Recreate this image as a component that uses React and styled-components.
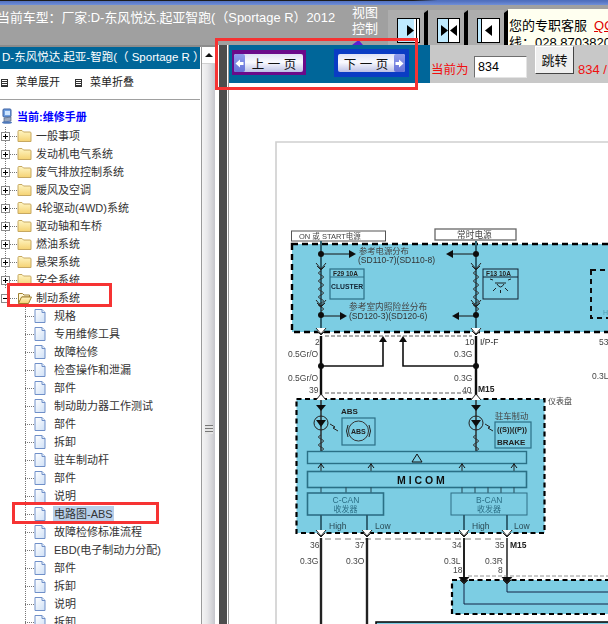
import React from "react";
import styled, { createGlobalStyle } from "styled-components";

const Global = createGlobalStyle`
  html, body { margin: 0; padding: 0; background: #fff; }
  body { font-family: "Liberation Sans", "Noto Sans CJK SC", sans-serif; text-spacing-trim: space-all; }
  * { box-sizing: border-box; }
`;

const CJK = `"Liberation Sans", "Noto Sans CJK SC", sans-serif`;

const Page = styled.div`
  position: relative;
  width: 608px;
  height: 624px;
  overflow: hidden;
  display: flex;
  flex-direction: column;
  font-family: ${CJK};
`;

const TitleStrip = styled.div`
  height: 5px;
  flex: none;
  background:
    linear-gradient(90deg, #1c1c1c 0 68%, #4f6fbe 72%) top / 100% 1px no-repeat,
    linear-gradient(#4a68b8, #6f8fd8);
`;

const Header = styled.header`
  height: 40px;
  flex: none;
  background: #a0a0a0;
  display: flex;
  align-items: stretch;
  color: #fff;
`;

const CarModel = styled.div`
  width: 355px;
  flex: none;
  font-size: 12.9px;
  line-height: 16px;
  padding-top: 5px;
  white-space: nowrap;
  overflow: hidden;
  margin-left: -3px;
`;

const ViewLabel = styled.div`
  position: relative;
  width: 36px;
  flex: none;
  font-size: 13px;
  line-height: 16px;
  padding-top: 0;
`;

const ViewMark = styled.span`
  position: absolute;
  left: 0;
  top: 35px;
  width: 11px;
  height: 5px;
  background: #5c1fd0;
  clip-path: polygon(0 100%, 60% 0, 100% 100%);
`;

const ViewButtons = styled.div`
  display: flex;
  gap: 4px;
  padding-top: 5px;
  width: 120px;
  flex: none;
  align-items: flex-start;
`;

const ViewButton = styled.div`
  position: relative;
  width: 36px;
  height: 35px;
  background: #adadad;
  padding: 8px 0 0 9px;
  &::after {
    content: "";
    position: absolute;
    right: -4px;
    top: 0;
    width: 4px;
    height: 35px;
    background: #000;
    clip-path: polygon(100% 0, 100% 100%, 0 100%, 0 3px);
  }
`;

const ServicePanel = styled.div`
  flex: 1;
  margin-top: 4px;
  background: #fffff0;
  color: #000;
  font-size: 13px;
  line-height: 17px;
  padding: 8px 0 0 1px;
  white-space: nowrap;
  overflow: hidden;
`;

const Qq = styled.span`
  color: #e00000;
  text-decoration: underline;
  margin-left: 7px;
`;

const Body = styled.div`
  flex: 1;
  min-height: 0;
  display: flex;
`;

const Sidebar = styled.aside`
  width: 201px;
  flex: none;
  border-top: 2px solid #8c8c8c;
  background: #fff;
  overflow: hidden;
  display: flex;
  flex-direction: column;
`;

const SideTitle = styled.div`
  height: 22px;
  margin-right: 1px;
  background: #006699;
  color: #fff;
  font-size: 11.5px;
  line-height: 21px;
  padding-left: 2px;
  white-space: nowrap;
  overflow: hidden;
  flex: none;
`;

const MenuRow = styled.div`
  height: 31px;
  flex: none;
  margin-right: 1px;
  display: flex;
  align-items: flex-start;
  padding: 6px 0 0 1px;
  border-bottom: 1px solid #a0a0a0;
  font-size: 11px;
  line-height: 14px;
  color: #222;
`;

const MenuItem = styled.span`
  display: flex;
  align-items: center;
  gap: 8px;
  width: 74px;
`;

const MenuGlyph = styled.span`
  width: 7px;
  height: 8px;
  border: 1px solid #333;
  background: repeating-linear-gradient(#fff 0 1px, #333 1px 2px);
  margin-top: 2px;
`;

const Current = styled.div`
  height: 27px;
  flex: none;
  display: flex;
  align-items: center;
  gap: 4px;
  padding: 4px 0 0 2px;
  color: #0000ff;
  font-size: 11px;
  font-weight: 700;
`;

const Tree = styled.ul`
  list-style: none;
  margin: 0;
  padding: 0;
  font-size: 11px;
  color: #333;
`;

const dottedAt = (x) => `
  background-image: linear-gradient(#777 50%, transparent 50%);
  background-size: 1px 2px;
  background-repeat: repeat-y;
  background-position: ${x}px 0;
`;

const FolderRow = styled.li`
  height: 18px;
  display: flex;
  align-items: center;
  padding-left: 1px;
  ${(p) => (p.$last ? "" : dottedAt(5))}
`;

const LeafRow = styled.li`
  height: 18px;
  display: flex;
  align-items: center;
  padding-left: 25px;
  ${dottedAt(25)}
`;

const Expander = styled.span`
  width: 9px;
  height: 9px;
  flex: none;
  border: 1px solid #8a8a8a;
  background:
    ${(p) => (p.$open ? "" : "linear-gradient(#000, #000) center / 1px 5px no-repeat,")}
    linear-gradient(#000, #000) center / 5px 1px no-repeat,
    #fff;
`;

const Dots = styled.span`
  width: ${(p) => p.$w}px;
  flex: none;
  height: 1px;
  background-image: linear-gradient(90deg, #777 50%, transparent 50%);
  background-size: 2px 1px;
`;

const Label = styled.span`
  margin-left: ${(p) => p.$gap}px;
  white-space: nowrap;
  line-height: 16px;
  padding: 0 1px;
  background: ${(p) => (p.$selected ? "#b8cfe9" : "transparent")};
`;

const Splitter = styled.div`
  width: 14px;
  flex: none;
  display: flex;
  flex-direction: column;
  align-items: center;
  border-left: 1px solid #9a9a9a;
  border-top: 2px solid #8c8c8c;
  background: linear-gradient(90deg, #f4f4f4, #e8e8ea 40%, #c6c6cc);
`;

const ScrollUp = styled.div`
  width: 100%;
  height: 17px;
  flex: none;
  background: #fff;
  display: flex;
  justify-content: center;
  padding-top: 6px;
  border-bottom: 1px solid #d0d0d0;
  &::before {
    content: "";
    width: 0;
    height: 0;
    border-left: 4px solid transparent;
    border-right: 4px solid transparent;
    border-bottom: 4px solid #111;
  }
`;

const Grip = styled.div`
  width: 8px;
  height: 9px;
  margin-top: 361px;
  background: repeating-linear-gradient(#777 0 1px, #e4e4e4 1px 3px);
`;

const Gutter = styled.div`
  width: 13px;
  flex: none;
  background: #fff;
  display: flex;
  padding-left: 4px;
`;

const GutterBar = styled.div`
  width: 8px;
  background: #4d4d4d;
  margin-right: 1px;
`;

const Main = styled.main`
  flex: 1;
  min-width: 0;
  display: flex;
  flex-direction: column;
  border-left: 1px solid #999;
`;

const Toolbar = styled.div`
  height: 38px;
  flex: none;
  display: flex;
  background: #c8c8c8;
`;

const PagerBand = styled.div`
  width: 201px;
  flex: none;
  background: #006699;
  display: flex;
  align-items: flex-start;
  padding: 4px 0 0 3px;
  gap: 28px;
`;

const PagerFrame = styled.div`
  padding: ${(p) => (p.$tall ? "5px 4px" : "4px 3px 3px 2px")};
  margin-top: ${(p) => (p.$tall ? "0" : "1px")};
  background: ${(p) => p.$color};
`;

const PagerButton = styled.button`
  width: ${(p) => p.$w}px;
  height: 18px;
  border: 0;
  border-radius: 2px;
  padding: 0;
  display: flex;
  align-items: center;
  flex-direction: ${(p) => (p.$next ? "row-reverse" : "row")};
  background: linear-gradient(#dfe2f4, #fafaff 45%, #bcc1e6);
  font: 12.5px ${CJK};
  color: #111;
`;

const PagerArrow = styled.span`
  width: 11px;
  height: 18px;
  flex: none;
  border-radius: 2px;
  background: linear-gradient(#8f9cec, #6672d8);
  display: flex;
  align-items: center;
  justify-content: center;
`;

const PagerText = styled.span`
  flex: 1;
  text-align: center;
`;

const JumpArea = styled.div`
  flex: 1;
  display: flex;
  align-items: flex-start;
  padding-left: 1px;
  white-space: nowrap;
  color: #f01010;
  font-size: 12.5px;
  overflow: hidden;
  background: #c8c8c8;
`;

const JumpLabel = styled.span`
  margin-top: 16px;
  width: 43px;
  flex: none;
  line-height: 18px;
`;

const PageInput = styled.input`
  width: 53px;
  height: 22px;
  flex: none;
  margin-top: 11px;
  border: 1px solid;
  border-color: #6e6e6e #e4e4e4 #e4e4e4 #6e6e6e;
  background: #fff;
  padding: 0 0 0 3px;
  font: 12.5px "Liberation Sans", sans-serif;
  color: #000;
  outline: 0;
`;

const JumpButton = styled.button`
  width: 39px;
  height: 28px;
  flex: none;
  margin: 1px 0 0 8px;
  padding: 0 0 2px;
  border: 1px solid;
  border-color: #fff #444 #444 #fff;
  background: #efefef;
  font: 13px ${CJK};
  color: #111;
`;

const PageCount = styled.span`
  margin: 16px 0 0 4px;
  line-height: 18px;
  font-size: 13px;
`;

const Sheet = styled.div`
  flex: 1;
  min-height: 0;
  overflow: hidden;
  background: #fff;
`;

const Diagram = styled.svg`
  display: block;
  width: 379px;
  height: 541px;
`;

const Highlight = styled.div`
  position: absolute;
  left: ${(p) => p.$x}px;
  top: ${(p) => p.$y}px;
  width: ${(p) => p.$w}px;
  height: ${(p) => p.$h}px;
  border: 3px solid #f63333;
  pointer-events: none;
`;

const ViewGlyph = ({ kind }) => (
  <svg width="23" height="25" viewBox="0 0 23 25">
    <rect x="0.5" y="0.5" width="22" height="24" fill="#fff" stroke="#000" />
    {kind === "right" && (
      <>
        <rect x="1" y="1" width="16" height="23" fill="#bfeaff" />
        <line x1="19.5" y1="1" x2="19.5" y2="24" stroke="#000" />
        <path d="M10 7 l7 5.5 -7 5.5z" fill="#000" />
      </>
    )}
    {kind === "both" && (
      <>
        <rect x="1" y="1" width="10" height="23" fill="#bfeaff" />
        <line x1="11.5" y1="1" x2="11.5" y2="24" stroke="#000" />
        <path d="M4 7 l7 5.5 -7 5.5z M20 7 l-7 5.5 7 5.5z" fill="#000" />
      </>
    )}
    {kind === "left" && (
      <>
        <rect x="1" y="1" width="3" height="23" fill="#bfeaff" />
        <line x1="4.5" y1="1" x2="4.5" y2="24" stroke="#000" />
        <path d="M15 7 l-7 5.5 7 5.5z" fill="#000" />
      </>
    )}
  </svg>
);

const PageArrowIcon = ({ next }) => (
  <svg width="9" height="9" viewBox="0 0 9 9" style={next ? undefined : { transform: "scaleX(-1)" }}>
    <path d="M0.5 3 H4 V0.5 L8.5 4.5 L4 8.5 V6 H0.5 Z" fill="#fff" />
  </svg>
);

const FolderIcon = ({ open }) => (
  <svg width="15" height="14" viewBox="0 0 15 14" style={{ flex: "none" }}>
    <defs>
      <linearGradient id="fold" x1="0" y1="0" x2="0" y2="1">
        <stop offset="0" stopColor="#fff6c4" />
        <stop offset="1" stopColor="#f5d272" />
      </linearGradient>
    </defs>
    {open ? (
      <g stroke="#a08030" strokeWidth="1" strokeLinejoin="round">
        <path d="M1.5 12.5 V2.5 h4 l1.5 1.5 h5.5 V6 H5 Z" fill="#fff8d8" />
        <path d="M1.5 12.5 L4.5 6 H14.5 L11.5 12.5 Z" fill="url(#fold)" />
      </g>
    ) : (
      <path d="M1 12.5 V2.5 q0 -1 1 -1 h3 l1.5 1.5 h6.5 q1 0 1 1 v8.5 Z" fill="url(#fold)" stroke="#c7a861" strokeWidth="1" />
    )}
  </svg>
);

const DocIcon = () => (
  <svg width="12" height="14" viewBox="0 0 12 14" style={{ flex: "none" }}>
    <defs>
      <linearGradient id="doc" x1="0" y1="0" x2="1" y2="1">
        <stop offset="0" stopColor="#fff" />
        <stop offset="1" stopColor="#cfe0f6" />
      </linearGradient>
    </defs>
    <path d="M1 0.5 H8 L11 3.5 V13.5 H1 Z" fill="url(#doc)" stroke="#6f8fc8" />
    <path d="M8 0.5 V3.5 H11" fill="#e8f0fa" stroke="#6f8fc8" />
  </svg>
);

const PcIcon = () => (
  <svg width="11" height="16" viewBox="0 0 11 16" style={{ flex: "none" }}>
    <rect x="1" y="1" width="8" height="8" rx="1" fill="#6f9fe0" stroke="#3a5fa0" />
    <rect x="3" y="3" width="5" height="4" fill="#cfe6ff" />
    <path d="M2 10 L9 9 V13 L2 14 Z" fill="#9aa8be" stroke="#55667f" strokeWidth="0.7" />
    <ellipse cx="5" cy="14.5" rx="5" ry="1.3" fill="#4f79bb" />
  </svg>
);

const beforeFolders = ["一般事项", "发动机电气系统", "废气排放控制系统", "暖风及空调", "4轮驱动(4WD)系统", "驱动轴和车桥", "燃油系统", "悬架系统", "安全系统"];
const leaves = ["规格", "专用维修工具", "故障检修", "检查操作和泄漏", "部件", "制动助力器工作测试", "部件", "拆卸", "驻车制动杆", "部件", "说明", "电路图-ABS", "故障检修标准流程", "EBD(电子制动力分配)", "部件", "拆卸", "说明", "拆卸"];

const T = ({ x, y, s = 8.5, b, fill = "#444", children }) => (
  <text x={x} y={y} fontSize={s} fontWeight={b ? 700 : 400} fill={fill} fontFamily={CJK}>{children}</text>
);

const Dot = ({ x, y }) => <circle cx={x} cy={y} r="3" fill="#111" />;

const Chevron = ({ x, y, fill = "#fff" }) => (
  <path d={`M${x - 5} ${y - 3} L${x} ${y + 3} L${x + 5} ${y - 3} M${x - 4} ${y + 0} L${x} ${y + 4} L${x + 4} ${y + 0}`} fill={fill} stroke="#222" strokeWidth="1" />
);

const UpChevron = ({ x, y }) => (
  <path d={`M${x - 5} ${y + 3} L${x} ${y - 3} L${x + 5} ${y + 3}`} fill="#fff" stroke="#222" strokeWidth="1" />
);

const Coil = ({ x, y, n = 3 }) => (
  <path d={`M${x} ${y} ` + Array.from({ length: n }, () => `q-5 2 0 4 q5 2 0 4`).join(" ")} fill="none" stroke="#333" strokeWidth="1" />
);

const Receiver = ({ x, w, title, heavy }) => (
  <g>
    <rect x={x} y="493" width={w} height="22" fill="#7ccde3" stroke="#2c6f86" strokeWidth={heavy ? 1.6 : 1} />
    <T x={x + 25} y="503" fill="#2c6f86">{title}</T>
    <T x={x + 26} y="512" s={8} fill="#2c6f86">收发器</T>
  </g>
);

const SchematicArt = () => (
  <Diagram viewBox="229 83 379 541">
    <defs>
      <filter id="soft" x="-2%" y="-2%" width="104%" height="104%">
        <feGaussianBlur stdDeviation="0.3" />
      </filter>
    </defs>
    <path d="M276 624 V142 H608" fill="none" stroke="#cfcfcf" strokeWidth="1.6" />
    <g filter="url(#soft)">
      <rect x="291.5" y="231" width="94" height="10" fill="#fff" stroke="#555" />
      <T x="299" y="238.5" s={7.5}>ON 或 START电源</T>
      <rect x="435" y="229" width="81" height="11" fill="#fff" stroke="#666" strokeWidth="1.3" />
      <T x="457" y="238" s={8.7}>常时电源</T>

      <rect x="292" y="244" width="330" height="88" fill="#7ccde3" stroke="#000" strokeWidth="2.4" strokeDasharray="6 4" />
      <path d="M321 241 V330 M476 241 V330" stroke="#2f6070" strokeWidth="2" />
      <Dot x={321} y={254} /><Dot x={476} y={254} /><Dot x={321} y={315} /><Dot x={476} y={315} />
      <path d="M321 254 H350 M476 254 H450 M321 316 H342 M476 316 H456" stroke="#111" strokeWidth="1" />
      <path d="M349 250 l7 4 -7 4z M453 250 l-7 4 7 4z M340 312 l7 4 -7 4z M459 312 l-7 4 7 4z" fill="#111" />
      <T x={359} y={254} s={8.3}>参考电源分布</T>
      <T x={358} y={263} s={8.5} fill="#333">(SD110-7)(SD110-8)</T>
      <T x={349} y={310} s={8.7}>参考室内照险丝分布</T>
      <T x={349} y={319} s={8.5} fill="#333">(SD120-3)(SD120-6)</T>
      <rect x="330" y="269" width="34" height="30" fill="#7ccde3" stroke="#2c6f86" strokeWidth="1.2" />
      <path d="M330 277 H364" stroke="#2c6f86" />
      <T x={333} y={275.5} s={6.5} b fill="#222">F29 10A</T>
      <T x={331} y={289} s={6.8} b fill="#123">CLUSTER</T>
      <rect x="483" y="269" width="35" height="30" fill="#7ccde3" stroke="#123" strokeWidth="1" />
      <path d="M483 277 H518" stroke="#123" />
      <T x={486} y={275.5} s={6.5} b fill="#222">F13 10A</T>
      <path d="M495 283 H506 M497 284 q3.5 6 7 0 M493 280 l-3 -1 M508 280 l3 -1 M496 288 l-3 3 M505 288 l3 3 M500.5 290 v3" fill="none" stroke="#111" strokeWidth="0.9" />
      <Coil x={321} y={271} n={5} /><Coil x={476} y={271} n={5} />
      <Chevron x={321} y={266} fill="none" /><Chevron x={476} y={266} fill="none" />
      <Chevron x={321} y={303} fill="none" /><Chevron x={476} y={303} fill="none" />
      <rect x="591" y="270" width="40" height="48" fill="none" stroke="#111" strokeWidth="2" strokeDasharray="5 4" />
      <T x={603} y={315} s={7} fill="#4d99ad">H</T>
      <Chevron x={321} y={331} /><Chevron x={476} y={331} />

      <path d="M325 336 H472" stroke="#333" strokeWidth="0.8" strokeDasharray="4 2" />
      <path d="M321 336 V397 M476 336 V397" stroke="#111" strokeWidth="2.4" />
      <Dot x={321} y={366} /><Dot x={476} y={366} />
      <path d="M321 366 H383 V342 M476 366 H403 V342" fill="none" stroke="#111" strokeWidth="1.6" />
      <path d="M379 342 l4 -6 4 6z M399 342 l4 -6 4 6z" fill="#111" />
      <T x={315} y={345}>2</T><T x={465} y={345}>10</T><T x={480} y={345} fill="#222">I/P-F</T>
      <T x={288} y={357}>0.5Gr/O</T><T x={454} y={357}>0.3G</T>
      <T x={288} y={381}>0.5Gr/O</T><T x={454} y={381}>0.3G</T>
      <T x={309} y={393}>39</T><T x={462} y={393}>40</T><T x={478} y={392} b fill="#222">M15</T>
      <path d="M325 393 H472" stroke="#333" strokeWidth="0.8" strokeDasharray="4 2" />
      <T x={599} y={345}>53</T><T x={592} y={379}>0.3L</T>

      <rect x="296.5" y="399" width="248" height="134" fill="#7ccde3" stroke="#000" strokeWidth="2.2" strokeDasharray="5 3.5" />
      <T x={548} y={404} s={8}>仪表盘</T>
      <UpChevron x={321} y={397} /><UpChevron x={476} y={397} />
      <path d="M321 400 V451 M476 400 V451" stroke="#222" strokeWidth="1.4" />
      <path d="M316 405 h10 l-5 6z M471 405 h10 l-5 6z" fill="#111" />
      <circle cx="321" cy="423" r="7" fill="none" stroke="#222" /><circle cx="476" cy="423" r="7" fill="none" stroke="#222" />
      <path d="M316 420 h10 l-5 7z M471 420 h10 l-5 7z" fill="#111" />
      <path d="M330 424 l5 3 -2 1 5 3 M485 424 l5 3 -2 1 5 3" fill="none" stroke="#222" />
      <Coil x={321} y={435} n={2} /><Coil x={476} y={435} n={2} />
      <T x={341} y={414} s={8} b fill="#222">ABS</T>
      <rect x="342" y="418" width="33" height="27" fill="#7ccde3" stroke="#2c6f86" strokeWidth="1.2" />
      <circle cx="358.5" cy="431" r="10" fill="none" stroke="#333" />
      <path d="M348 425 q-3 6 0 12 M369 425 q3 6 0 12" fill="none" stroke="#222" />
      <T x={351} y={434} s={7} b fill="#222">ABS</T>
      <T x={495} y={419} s={8.3}>驻车制动</T>
      <rect x="495" y="422" width="36" height="26" fill="#7ccde3" stroke="#2c6f86" strokeWidth="1.2" />
      <T x={497} y={432} s={7.5} b fill="#222">((S))((P))</T>
      <T x={497} y={445} s={8} b fill="#222">BRAKE</T>

      <rect x="307.5" y="451.5" width="219" height="12" fill="#7ccde3" stroke="#2c6f86" strokeWidth="1.4" />
      <path d="M417 454 l-5 8 h10z" fill="none" stroke="#111" />
      <path d="M321 463 V471 M371 463 V471 M462 463 V471 M514 463 V471" stroke="#222" strokeWidth="1" />
      <path d="M318 468 l3 -4 3 4 M368 468 l3 -4 3 4 M459 468 l3 -4 3 4 M511 468 l3 -4 3 4" fill="none" stroke="#111" />
      <rect x="307.5" y="471.5" width="219" height="16" fill="#7ccde3" stroke="#2c6f86" strokeWidth="1.6" />
      <T x={397} y={484} s={10.5} b fill="#111">M I C O M</T>
      <path d="M321 487 V493 M346 487 V493 M371 487 V493 M462 487 V493 M475 487 V493 M488 487 V493 M501 487 V493 M514 487 V493" stroke="#2c5060" strokeWidth="1.1" />
      <Receiver x={307.5} w={76} title="C-CAN" heavy />
      <Receiver x={451} w={76} title="B-CAN" />
      <path d="M321 515 V533 M367 515 V533 M464 515 V533 M507 515 V533" stroke="#2c5a6a" strokeWidth="1.8" />
      <T x={329} y={529} fill="#2a4a55">High</T><T x={375} y={529} fill="#2a4a55">Low</T>
      <T x={472} y={529} fill="#2a4a55">High</T><T x={514} y={529} fill="#2a4a55">Low</T>
      <Chevron x={321} y={533} /><Chevron x={367} y={533} /><Chevron x={464} y={533} /><Chevron x={507} y={533} />
      <path d="M325 539 H505" stroke="#aaa" strokeWidth="1.6" strokeDasharray="6 4" />
      <T x={310} y={548}>36</T><T x={355} y={548}>37</T><T x={452} y={548}>34</T><T x={495} y={548}>35</T><T x={510} y={548} b fill="#222">M15</T>
      <T x={300} y={564}>0.3G</T><T x={346} y={564}>0.3O</T><T x={444} y={564}>0.3L</T><T x={485} y={564}>0.3R</T>
      <path d="M321 538 V624 M367 538 V624" stroke="#222" strokeWidth="2.4" />
      <path d="M464 538 V580" stroke="#222" strokeWidth="2" /><path d="M507 538 V580" stroke="#111" strokeWidth="1.4" />
      <T x={453} y={573}>18</T><T x={498} y={573}>8</T>
      <path d="M468 576 H608" stroke="#777" strokeWidth="0.8" strokeDasharray="4 2" />
      <rect x="452" y="580" width="170" height="34" fill="#7ccde3" stroke="#000" strokeWidth="2.2" strokeDasharray="5 3.5" />
      <path d="M507 580 V592 H608 M464 580 V604 H608" fill="none" stroke="#124" strokeWidth="1" />
      <Chevron x={464} y={580} fill="#111" /><Chevron x={507} y={580} fill="#111" />
      <rect x="376" y="622" width="240" height="10" fill="#7ccde3" stroke="#000" strokeWidth="1.5" />
    </g>
  </Diagram>
);

export default function App() {
  return (
    <Page>
      <Global />
      <TitleStrip />
      <Header>
        <CarModel>当前车型：厂家:D-东风悦达.起亚智跑(（Sportage R）2012</CarModel>
        <ViewLabel>视图<br />控制<ViewMark /></ViewLabel>
        <ViewButtons>
          <ViewButton><ViewGlyph kind="right" /></ViewButton>
          <ViewButton><ViewGlyph kind="both" /></ViewButton>
          <ViewButton><ViewGlyph kind="left" /></ViewButton>
        </ViewButtons>
        <ServicePanel>您的专职客服<Qq>QQ</Qq><br />线：028 87038200</ServicePanel>
      </Header>
      <Body>
        <Sidebar>
          <SideTitle>D-东风悦达.起亚-智跑(（ Sportage R ）</SideTitle>
          <MenuRow>
            <MenuItem><MenuGlyph />菜单展开</MenuItem>
            <MenuItem><MenuGlyph />菜单折叠</MenuItem>
          </MenuRow>
          <Current><PcIcon />当前:维修手册</Current>
          <Tree>
            {beforeFolders.map((name) => (
              <FolderRow key={name}>
                <Expander /><Dots $w={7} /><FolderIcon /><Label $gap={3}>{name}</Label>
              </FolderRow>
            ))}
            <FolderRow $last>
              <Expander $open /><Dots $w={7} /><FolderIcon open /><Label $gap={3}>制动系统</Label>
            </FolderRow>
            {leaves.map((name, i) => (
              <LeafRow key={i}>
                <Dots $w={9} /><DocIcon /><Label $gap={7} $selected={name === "电路图-ABS"}>{name}</Label>
              </LeafRow>
            ))}
          </Tree>
        </Sidebar>
        <Splitter><ScrollUp /><Grip /></Splitter>
        <Gutter><GutterBar /></Gutter>
        <Main>
          <Toolbar>
            <PagerBand>
              <PagerFrame $color="#6a0a8a">
                <PagerButton $w={69}><PagerArrow><PageArrowIcon /></PagerArrow><PagerText>上 一 页</PagerText></PagerButton>
              </PagerFrame>
              <PagerFrame $tall $color="#0a3cc4">
                <PagerButton $w={67} $next><PagerArrow><PageArrowIcon next /></PagerArrow><PagerText>下 一 页</PagerText></PagerButton>
              </PagerFrame>
            </PagerBand>
            <JumpArea>
              <JumpLabel>当前为</JumpLabel>
              <PageInput defaultValue="834" />
              <JumpButton>跳转</JumpButton>
              <PageCount>834 / 1200</PageCount>
            </JumpArea>
          </Toolbar>
          <Sheet><SchematicArt /></Sheet>
        </Main>
      </Body>
      <Highlight $x={215} $y={38} $w={203} $h={52} />
      <Highlight $x={7} $y={283} $w={105} $h={24} />
      <Highlight $x={12} $y={502} $w={147} $h={22} />
    </Page>
  );
}
